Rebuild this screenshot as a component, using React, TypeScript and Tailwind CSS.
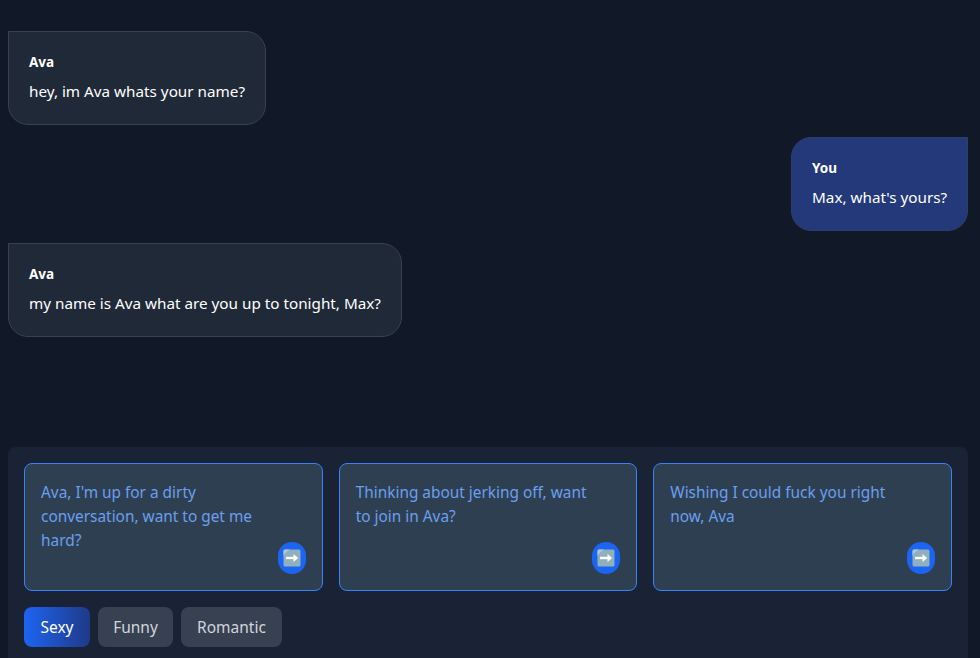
function ArrowEmoji() {
  return (
    <svg width="20" height="20" viewBox="0 0 20 20" aria-hidden="true">
      <rect x="1.5" y="1.5" width="17" height="17" rx="1.5" fill="#8fb0bd" />
      <path d="M1.5 8V3a1.5 1.5 0 0 1 1.5-1.5h5C5 3 3 5 1.5 8z" fill="#b0c8d2" />
      <path d="M4 10h9.5" stroke="#ffffff" strokeWidth="2.4" />
      <path d="M11.5 6 16.2 10l-4.7 4z" fill="#ffffff" />
    </svg>
  );
}

const messages = [
  { from: "Ava", text: "hey, im Ava whats your name?" },
  { from: "You", text: "Max, what's yours?" },
  { from: "Ava", text: "my name is Ava what are you up to tonight, Max?" },
];

const suggestions = [
  "Ava, I'm up for a dirty conversation, want to get me hard?",
  "Thinking about jerking off, want to join in Ava?",
  "Wishing I could fuck you right now, Ava",
];

export default function App() {
  return (
    <div className="flex h-[658px] flex-col overflow-hidden bg-[#111827] font-['Noto_Sans','Open_Sans',sans-serif] text-white">
      {/* Chat log */}
      <div className="flex flex-1 flex-col gap-3 pl-2 pr-3 pt-[31px]">
        {messages.map((m, i) =>
          m.from === "You" ? (
            <div
              key={i}
              className="w-[177px] self-end rounded-[20px] rounded-tr-none border border-[#2f3f63] bg-[#23397a] p-5"
            >
              <div className="text-[13.5px] font-bold leading-5">{m.from}</div>
              <div className="mb-px mt-[7px] whitespace-nowrap text-[15.25px] leading-6">{m.text}</div>
            </div>
          ) : (
            <div
              key={i}
              className="self-start rounded-[20px] rounded-tl-none border border-[#374151] bg-[#1f2937] p-5"
            >
              <div className="text-[13.5px] font-bold leading-5">{m.from}</div>
              <div className="mb-px mt-[7px] text-[15.25px] leading-6">{m.text}</div>
            </div>
          )
        )}
      </div>

      {/* Suggestions */}
      <div className="ml-2 mr-3 rounded-t-lg bg-[#1a2236] px-4 pb-[11px] pt-4">
        <div className="grid grid-cols-3 gap-4">
          {suggestions.map((s, i) => (
            <div
              key={i}
              className="relative h-32 rounded-lg border border-[#3b82f6] bg-[#2f3f52] pb-4 pl-4 pr-12 pt-[17px] text-[15.4px] leading-6 text-[#6a9fee]"
            >
              {s}
              <span className="absolute bottom-4 right-4 flex h-8 w-7 items-center justify-center rounded-full bg-[#1c64f2]">
                <ArrowEmoji />
              </span>
            </div>
          ))}
        </div>
        <div className="mt-4 flex gap-2 text-[15.5px]">
          <button className="h-10 w-[66px] rounded-lg bg-gradient-to-r from-[#1c64f2] to-[#1e3a8a] pt-px text-white">
            Sexy
          </button>
          <button className="h-10 w-[75px] rounded-lg bg-[#374151] pt-px text-[#d1d5db]">
            Funny
          </button>
          <button className="h-10 w-[101px] rounded-lg bg-[#374151] pt-px text-[#d1d5db]">
            Romantic
          </button>
        </div>
      </div>
    </div>
  );
}
